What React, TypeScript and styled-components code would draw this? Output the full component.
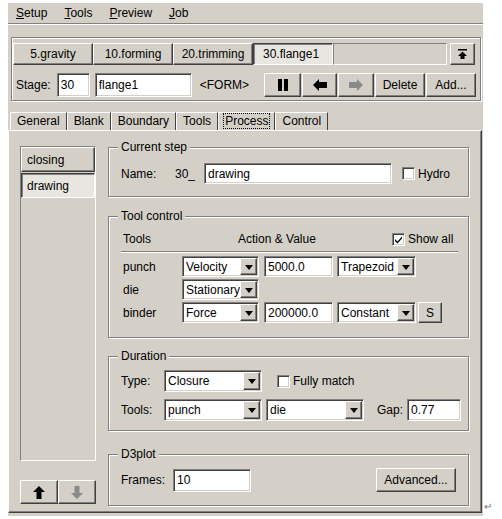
import styled, { createGlobalStyle, css } from "styled-components";

const face = "#d4d0c8";

const GlobalStyle = createGlobalStyle`
  * {
    box-sizing: border-box;
  }
  body {
    margin: 0;
    background: #fff;
    font-family: "Liberation Sans", Arial, sans-serif;
    font-size: 12px;
    color: #000;
  }
`;

const raised = css`
  border: 1px solid;
  border-color: #fff #404040 #404040 #fff;
  box-shadow: inset -1px -1px #808080;
  background: ${face};
`;

const sunken = css`
  border: 1px solid;
  border-color: #808080 #fff #fff #808080;
  box-shadow: inset 1px 1px #404040, inset -1px -1px ${face};
  background: #fff;
`;

const Page = styled.div`
  display: flex;
  align-items: flex-end;
  padding: 3px 0 0 8px;
`;

const Window = styled.div`
  width: 475px;
  background: ${face};
  padding-bottom: 3px;
`;

const ReturnMark = styled.span`
  font-size: 10px;
  color: #777;
  margin: 0 0 4px 1px;
`;

const MenuBar = styled.div`
  height: 21px;
  display: flex;
  align-items: center;
  gap: 17px;
  padding-left: 8px;
  border-bottom: 1px solid #808080;
  box-shadow: 0 1px #fff;
`;

const MenuItem = styled.span`
  u {
    text-decoration: underline;
  }
`;

const StageBox = styled.div`
  margin: 13px 2px 0 3px;
  border: 1px solid #808080;
  box-shadow: inset 1px 1px #fff, 1px 1px #fff;
  padding: 5px 4px 3px 1px;
`;

const StageTabs = styled.div`
  display: flex;
  height: 22px;
  margin-right: 1px;
`;

const StageTab = styled.button<{ $active?: boolean }>`
  width: 80px;
  height: 22px;
  font: inherit;
  color: #000;
  padding: 0;
  ${raised}
  ${(p) =>
    p.$active &&
    css`
      background: #e8e6e1;
      border-color: #404040 #fff #fff #404040;
      box-shadow: inset 1px 1px #808080;
      text-align: left;
      padding-left: 9px;
    `}
`;

const TabFiller = styled.div`
  flex: 1;
  border: 1px solid;
  border-color: #808080 #fff #fff #808080;
  margin-right: 3px;
`;

const Btn = styled.button<{ $w: number; $h?: number }>`
  width: ${(p) => p.$w}px;
  height: ${(p) => p.$h ?? 24}px;
  font: inherit;
  color: #000;
  padding: 0;
  display: flex;
  align-items: center;
  justify-content: center;
  ${raised}
`;

const StageRow = styled.div`
  display: flex;
  align-items: center;
  height: 24px;
  margin-top: 8px;
  padding-left: 3px;
`;

const Field = styled.div<{ $w: number; $h?: number; $ml?: number }>`
  ${sunken}
  width: ${(p) => p.$w}px;
  height: ${(p) => p.$h ?? 21}px;
  margin-left: ${(p) => p.$ml ?? 0}px;
  padding-left: 3px;
  display: flex;
  align-items: center;
  white-space: nowrap;
  overflow: hidden;
  flex-shrink: 0;
`;

const FormTag = styled.span`
  margin-left: 8px;
`;

const ButtonGroup = styled.div`
  display: flex;
  gap: 1px;
  margin-left: auto;
`;

const TabStrip = styled.div`
  display: flex;
  height: 18px;
  margin-top: 11px;
  padding-left: 2px;
`;

const Tab = styled.div<{ $active?: boolean }>`
  padding: 0 5px;
  line-height: 16px;
  border-top: 1px solid #fff;
  border-left: 1px solid #fff;
  border-right: 1px solid #404040;
  span {
    padding: 0 1px;
    outline: ${(p) => (p.$active ? "1px dotted #000" : "none")};
  }
`;

const Panel = styled.div`
  margin-right: 1px;
  border: 1px solid;
  border-color: #fff #404040 #404040 #fff;
  box-shadow: inset -1px -1px #808080;
  display: flex;
  gap: 12px;
  padding: 15px 12px 6px 11px;
`;

const LeftCol = styled.div`
  width: 76px;
  display: flex;
  flex-direction: column;
  padding-bottom: 2px;
`;

const StepList = styled.div`
  flex: 1;
  border: 1px solid;
  border-color: #808080 #fff #fff #808080;
  display: flex;
  flex-direction: column;
`;

const StepItem = styled.div<{ $selected?: boolean }>`
  height: 25px;
  padding-left: 5px;
  display: flex;
  align-items: center;
  ${raised}
  ${(p) =>
    p.$selected &&
    css`
      margin-top: 1px;
      background: #e8e6e1;
      border-color: #404040 #fff #fff #404040;
      box-shadow: inset 1px 1px #808080;
    `}
`;

const ArrowRow = styled.div`
  display: flex;
  margin-top: 19px;
`;

const RightCol = styled.div`
  width: 361px;
  display: flex;
  flex-direction: column;
`;

const Group = styled.div<{ $mt: number }>`
  position: relative;
  margin-top: ${(p) => p.$mt}px;
  border: 1px solid #808080;
  box-shadow: inset 1px 1px #fff, 1px 1px #fff;
`;

const Legend = styled.span`
  position: absolute;
  top: -8px;
  left: 9px;
  padding: 0 3px;
  line-height: 14px;
  background: ${face};
`;

const GroupBody = styled.div<{ $pad: string }>`
  padding: ${(p) => p.$pad};
  display: flex;
  flex-direction: column;
`;

const Row = styled.div<{ $h: number; $mt?: number }>`
  display: flex;
  align-items: center;
  height: ${(p) => p.$h}px;
  margin-top: ${(p) => p.$mt ?? 0}px;
`;

const Label = styled.span<{ $w?: number; $ml?: number }>`
  width: ${(p) => (p.$w ? `${p.$w}px` : "auto")};
  margin-left: ${(p) => p.$ml ?? 0}px;
  flex-shrink: 0;
  white-space: nowrap;
`;

const CheckBox = styled.span<{ $ml?: number }>`
  ${sunken}
  width: 13px;
  height: 13px;
  margin-left: ${(p) => p.$ml ?? 0}px;
  display: inline-flex;
  align-items: center;
  justify-content: center;
  flex-shrink: 0;
`;

const Separator = styled.div`
  height: 2px;
  border-top: 1px solid #808080;
  border-bottom: 1px solid #fff;
  margin: 3px 0;
`;

const ToolRows = styled.div`
  display: flex;
  flex-direction: column;
  gap: 2px;
  padding-left: 2px;
`;

const SelectBox = styled.div<{ $w: number; $h?: number; $ml?: number }>`
  ${sunken}
  width: ${(p) => p.$w}px;
  height: ${(p) => p.$h ?? 21}px;
  margin-left: ${(p) => p.$ml ?? 0}px;
  padding: 1px;
  display: flex;
  flex-shrink: 0;
`;

const SelectText = styled.span`
  flex: 1;
  overflow: hidden;
  white-space: nowrap;
  padding-left: 2px;
  display: flex;
  align-items: center;
`;

const DropButton = styled.span`
  width: 17px;
  flex-shrink: 0;
  display: flex;
  align-items: center;
  justify-content: center;
  ${raised}
  &::after {
    content: "";
    border-left: 4px solid transparent;
    border-right: 4px solid transparent;
    border-top: 5px solid #000;
    margin-top: 1px;
  }
`;

const Select = ({ value, w, h, ml }: { value: string; w: number; h?: number; ml?: number }) => (
  <SelectBox $w={w} $h={h} $ml={ml}>
    <SelectText>{value}</SelectText>
    <DropButton />
  </SelectBox>
);

const Check = ({ checked, ml }: { checked?: boolean; ml?: number }) => (
  <CheckBox $ml={ml}>
    {checked && (
      <svg width="9" height="9" viewBox="0 0 9 9">
        <path d="M1 4 L3.5 6.5 L8 1.5 L8 3.5 L3.5 8.5 L1 6 Z" fill="#000" />
      </svg>
    )}
  </CheckBox>
);

const TopIcon = () => (
  <svg width="9" height="10" viewBox="0 0 9 10">
    <rect x="0" y="0" width="9" height="1.5" fill="#000" />
    <polygon points="4.5,2.5 9,7 0,7" fill="#000" />
    <rect x="2.5" y="7" width="4" height="3" fill="#000" />
  </svg>
);

const PauseIcon = () => (
  <svg width="10" height="12" viewBox="0 0 10 12">
    <rect x="0" y="0" width="4" height="12" fill="#000" />
    <rect x="6" y="0" width="4" height="12" fill="#000" />
  </svg>
);

const SideArrow = ({ dir, color }: { dir: "left" | "right"; color: string }) => (
  <svg width="14" height="12" viewBox="0 0 14 12">
    <polygon
      points="0,6 6,0 6,3 14,3 14,9 6,9 6,12"
      fill={color}
      transform={dir === "right" ? "translate(14 0) scale(-1 1)" : undefined}
    />
  </svg>
);

const VertArrow = ({ dir, color }: { dir: "up" | "down"; color: string }) => (
  <svg width="12" height="13" viewBox="0 0 12 13">
    <polygon
      points="6,0 12,6 8.5,6 8.5,13 3.5,13 3.5,6 0,6"
      fill={color}
      transform={dir === "down" ? "translate(0 13) scale(1 -1)" : undefined}
    />
  </svg>
);

const App = () => {
  return (
    <>
      <GlobalStyle />
      <Page>
        <Window>
          <MenuBar>
            <MenuItem>
              <u>S</u>etup
            </MenuItem>
            <MenuItem>
              <u>T</u>ools
            </MenuItem>
            <MenuItem>
              <u>P</u>review
            </MenuItem>
            <MenuItem>
              <u>J</u>ob
            </MenuItem>
          </MenuBar>

          <StageBox>
            <StageTabs>
              <StageTab>5.gravity</StageTab>
              <StageTab>10.forming</StageTab>
              <StageTab>20.trimming</StageTab>
              <StageTab $active>30.flange1</StageTab>
              <TabFiller />
              <Btn $w={25} $h={22}>
                <TopIcon />
              </Btn>
            </StageTabs>
            <StageRow>
              <Label>Stage:</Label>
              <Field $w={33} $h={24} $ml={6}>
                30
              </Field>
              <Field $w={97} $h={24} $ml={5}>
                flange1
              </Field>
              <FormTag>&lt;FORM&gt;</FormTag>
              <ButtonGroup>
                <Btn $w={37}>
                  <PauseIcon />
                </Btn>
                <Btn $w={35}>
                  <SideArrow dir="left" color="#000" />
                </Btn>
                <Btn $w={36}>
                  <SideArrow dir="right" color="#8a8a8a" />
                </Btn>
                <Btn $w={50}>Delete</Btn>
                <Btn $w={50}>Add...</Btn>
              </ButtonGroup>
            </StageRow>
          </StageBox>

          <TabStrip>
            <Tab>
              <span>General</span>
            </Tab>
            <Tab>
              <span>Blank</span>
            </Tab>
            <Tab>
              <span>Boundary</span>
            </Tab>
            <Tab>
              <span>Tools</span>
            </Tab>
            <Tab $active>
              <span>Process</span>
            </Tab>
            <Tab>
              <span>Control</span>
            </Tab>
          </TabStrip>

          <Panel>
            <LeftCol>
              <StepList>
                <StepItem>closing</StepItem>
                <StepItem $selected>drawing</StepItem>
              </StepList>
              <ArrowRow>
                <Btn $w={38}>
                  <VertArrow dir="up" color="#000" />
                </Btn>
                <Btn $w={38}>
                  <VertArrow dir="down" color="#8a8a8a" />
                </Btn>
              </ArrowRow>
            </LeftCol>

            <RightCol>
              <Group $mt={1}>
                <Legend>Current step</Legend>
                <GroupBody $pad="15px 10px 12px 12px">
                  <Row $h={21}>
                    <Label $w={54}>Name:</Label>
                    <Label $w={29}>30_</Label>
                    <Field $w={188}>drawing</Field>
                    <Check ml={10} />
                    <Label $ml={3}>Hydro</Label>
                  </Row>
                </GroupBody>
              </Group>

              <Group $mt={19}>
                <Legend>Tool control</Legend>
                <GroupBody $pad="13px 10px 14px 12px">
                  <Row $h={18}>
                    <Label $w={117} style={{ paddingLeft: 2 }}>
                      Tools
                    </Label>
                    <Label $w={154}>Action &amp; Value</Label>
                    <Check checked />
                    <Label $ml={3}>Show all</Label>
                  </Row>
                  <Separator />
                  <ToolRows>
                    <Row $h={21}>
                      <Label $w={59}>punch</Label>
                      <Select value="Velocity" w={77} />
                      <Field $w={69} $ml={5}>
                        5000.0
                      </Field>
                      <Select value="Trapezoid" w={79} ml={4} />
                    </Row>
                    <Row $h={21}>
                      <Label $w={59}>die</Label>
                      <Select value="Stationary" w={77} />
                    </Row>
                    <Row $h={21}>
                      <Label $w={59}>binder</Label>
                      <Select value="Force" w={77} />
                      <Field $w={69} $ml={5}>
                        200000.0
                      </Field>
                      <Select value="Constant" w={79} ml={4} />
                      <Btn $w={24} $h={21} style={{ marginLeft: 2 }}>
                        S
                      </Btn>
                    </Row>
                  </ToolRows>
                </GroupBody>
              </Group>

              <Group $mt={18}>
                <Legend>Duration</Legend>
                <GroupBody $pad="13px 10px 9px 12px">
                  <Row $h={22}>
                    <Label $w={43}>Type:</Label>
                    <Select value="Closure" w={98} h={22} />
                    <Check ml={15} />
                    <Label $ml={3}>Fully match</Label>
                  </Row>
                  <Row $h={22} $mt={7}>
                    <Label $w={43}>Tools:</Label>
                    <Select value="punch" w={98} h={22} />
                    <Select value="die" w={98} h={22} ml={4} />
                    <Label $ml={13}>Gap:</Label>
                    <Field $w={54} $h={22} $ml={4}>
                      0.77
                    </Field>
                  </Row>
                </GroupBody>
              </Group>

              <Group $mt={23}>
                <Legend>D3plot</Legend>
                <GroupBody $pad="13px 12px 13px 12px">
                  <Row $h={24}>
                    <Label $w={52}>Frames:</Label>
                    <Field $w={78} $h={23}>
                      10
                    </Field>
                    <Btn $w={80} style={{ marginLeft: "auto" }}>
                      Advanced...
                    </Btn>
                  </Row>
                </GroupBody>
              </Group>
            </RightCol>
          </Panel>
        </Window>
        <ReturnMark>↵</ReturnMark>
      </Page>
    </>
  );
};

export default App;
